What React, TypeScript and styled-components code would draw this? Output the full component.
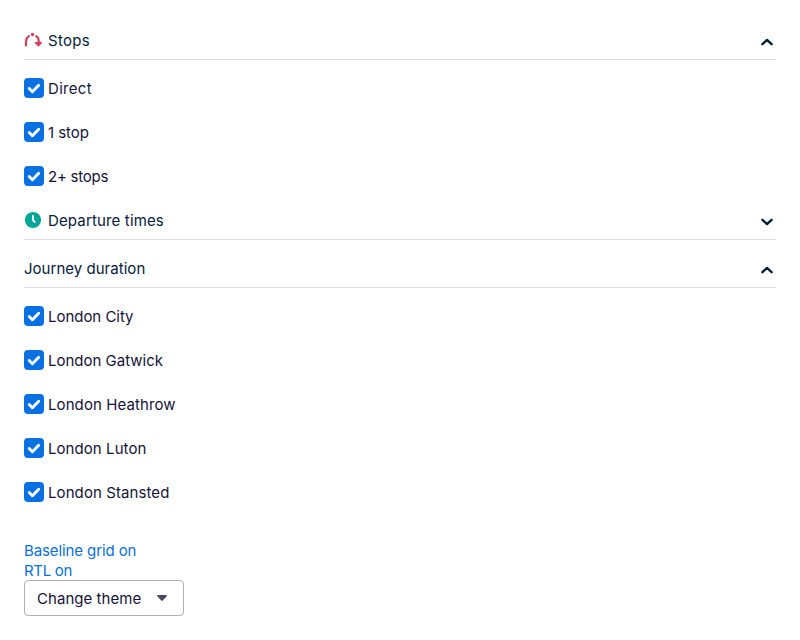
import React, { useState } from 'react';
import styled, { createGlobalStyle } from 'styled-components';

const GlobalStyle = createGlobalStyle`
  *, *::before, *::after { box-sizing: border-box; }
  body {
    margin: 0;
    background: #fff;
    color: #161616;
    font-family: Inter, "Liberation Sans", sans-serif;
    font-size: 15px;
    font-weight: 430;
    line-height: 24px;
  }
`;

const Page = styled.main`
  padding: 12px 24px 24px;
`;

const Header = styled.button`
  display: flex;
  align-items: center;
  width: 100%;
  height: 48px;
  padding: 10px 0 0;
  border: 0;
  border-bottom: 1px solid #dddde0;
  background: none;
  color: #05203c;
  font: inherit;
  text-align: left;
  cursor: pointer;
`;

const HeaderIcon = styled.span`
  display: flex;
  width: 18px;
  height: 18px;
  margin: -1px 6px 0 0;
`;

const Text = styled.span<{ $track?: number }>`
  letter-spacing: ${({ $track = 0 }) => $track}px;
  white-space: nowrap;
`;

const Chevron = styled.svg<{ $open: boolean }>`
  width: 18px;
  height: 18px;
  margin: 2px 0 0 auto;
  transform: ${({ $open }) => ($open ? 'none' : 'scaleY(-1)')};
`;

const Options = styled.div`
  display: flex;
  flex-direction: column;
  gap: 20px;
  padding: 17px 0 3px;
`;

const Option = styled.label`
  display: flex;
  align-items: center;
  gap: 4px;
  height: 24px;
  color: #161338;
  cursor: pointer;
`;

const Box = styled.span<{ $checked: boolean }>`
  display: flex;
  width: 20px;
  height: 20px;
  margin-bottom: 2px;
  border-radius: 4px;
  background: ${({ $checked }) => ($checked ? '#0770e3' : '#fff')};
  box-shadow: ${({ $checked }) => ($checked ? 'none' : 'inset 0 0 0 1px #b2aebd')};
`;

const HiddenInput = styled.input`
  display: none;
`;

const Footer = styled.div`
  display: flex;
  flex-direction: column;
  align-items: flex-start;
  padding-top: 32px;
`;

const LinkButton = styled.button`
  height: 20px;
  padding: 1px 0 0;
  border: 0;
  background: none;
  color: #0770e3;
  font: inherit;
  line-height: 20px;
  cursor: pointer;
`;

const ThemeSelect = styled.button`
  display: flex;
  align-items: center;
  justify-content: space-between;
  width: 160px;
  height: 36px;
  padding: 1px 16px 0 12px;
  border: 1px solid #b2aebd;
  border-radius: 4px;
  background: #fff;
  color: #161338;
  font: inherit;
  cursor: pointer;
`;

const Caret = styled.svg`
  width: 10px;
  height: 6px;
  margin-bottom: 2px;
`;

const StopsIcon = () => (
  <svg width="18" height="18" viewBox="0 0 18 18" fill="none">
    <path d="M2 14.4V10.4C2 7.8 3 6.2 5 5.1M12.2 5.1C14 6.1 14.7 7.8 14.7 10v3" stroke="#d1435b" strokeWidth="2.2" strokeLinecap="round" />
    <circle cx="8.5" cy="3.5" r="1.75" fill="#d1435b" />
    <path d="M11.2 11.1h6.2c.7 0 .9.6.5 1l-2.9 3.1c-.3.3-.8.3-1.1 0l-3.100-3.1c-.4-.4-.2-1 .4-1z" fill="#d1435b" />
  </svg>
);

const ClockIcon = () => (
  <svg width="18" height="18" viewBox="0 0 18 18" fill="none">
    <circle cx="9" cy="9" r="8.1" fill="#00a698" />
    <path d="M9 5v4.2l1.7 1.8" stroke="#fff" strokeWidth="1.9" strokeLinecap="round" strokeLinejoin="round" />
  </svg>
);

type SectionProps = {
  title: string;
  track?: number;
  icon?: React.ReactNode;
  initiallyOpen?: boolean;
  options: { label: string; track?: number }[];
};

const CheckOption = ({ label, track }: { label: string; track?: number }) => {
  const [checked, setChecked] = useState(true);
  return (
    <Option>
      <HiddenInput type="checkbox" checked={checked} onChange={() => setChecked(!checked)} />
      <Box $checked={checked}>
        <svg width="20" height="20" viewBox="0 0 20 20" fill="none">
          <path d="M5.2 10.5l3.2 3.2 6.3-6.4" stroke="#fff" strokeWidth="2.9" strokeLinecap="round" strokeLinejoin="round" />
        </svg>
      </Box>
      <Text $track={track}>{label}</Text>
    </Option>
  );
};

const Section = ({ title, track, icon, initiallyOpen = false, options }: SectionProps) => {
  const [open, setOpen] = useState(initiallyOpen);
  return (
    <section>
      <Header aria-expanded={open} onClick={() => setOpen(!open)}>
        {icon && <HeaderIcon>{icon}</HeaderIcon>}
        <Text $track={track}>{title}</Text>
        <Chevron $open={open} viewBox="0 0 18 18" fill="none">
          <path d="M4.4 11.2L9 6.9l4.6 4.3" stroke="#05203c" strokeWidth="2.4" strokeLinecap="round" strokeLinejoin="round" />
        </Chevron>
      </Header>
      {open && (
        <Options>
          {options.map((option) => (
            <CheckOption key={option.label} {...option} />
          ))}
        </Options>
      )}
    </section>
  );
};

export default function App() {
  return (
    <>
      <GlobalStyle />
      <Page>
        <Section
          title="Stops"
          track={0.3}
          icon={<StopsIcon />}
          initiallyOpen
          options={[
            { label: 'Direct', track: 0.3 },
            { label: '1 stop', track: -0.05 },
            { label: '2+ stops', track: -0.25 },
          ]}
        />
        <Section title="Departure times" track={0.15} icon={<ClockIcon />} options={[]} />
        <Section
          title="Journey duration"
          track={0.03}
          initiallyOpen
          options={[
            { label: 'London City', track: -0.03 },
            { label: 'London Gatwick', track: 0 },
            { label: 'London Heathrow', track: 0.09 },
            { label: 'London Luton', track: 0.07 },
            { label: 'London Stansted', track: 0.09 },
          ]}
        />
        <Footer>
          <LinkButton><Text $track={-0.1}>Baseline grid on</Text></LinkButton>
          <LinkButton><Text $track={-0.3}>RTL on</Text></LinkButton>
          <ThemeSelect>
            <Text $track={0.05}>Change theme</Text>
            <Caret viewBox="0 0 10 6">
              <path d="M.9 0h8.2c.8 0 1.100.8.6 1.300L5.700 5.600c-.4.4-1 .4-1.400 0L.3 1.300C-.2.8.1 0 .9 0z" fill="#4b4863" />
            </Caret>
          </ThemeSelect>
        </Footer>
      </Page>
    </>
  );
}
